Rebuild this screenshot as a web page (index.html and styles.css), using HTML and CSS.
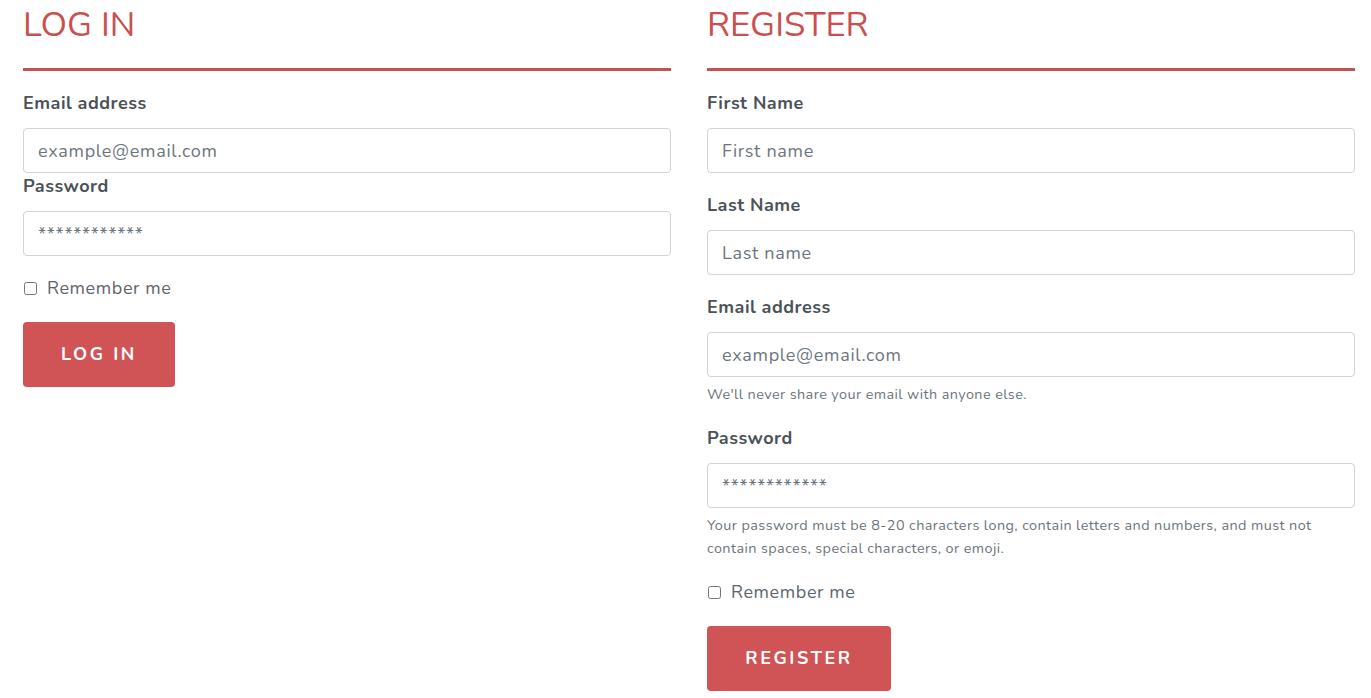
FILE: index.html
```html
<!DOCTYPE html>
<html lang="en">
<head>
<meta charset="utf-8">
<title>Log in / Register</title>
<link rel="stylesheet" href="styles.css">
</head>
<body>
<div class="page">
  <section class="panel">
    <h1 class="panel-title">LOG IN</h1>
    <form class="form">
      <div class="field tight">
        <label class="label">Email address</label>
        <input class="input" type="email" placeholder="example@email.com">
      </div>
      <div class="field">
        <label class="label">Password</label>
        <input class="input" type="text" placeholder="************">
      </div>
      <label class="check"><input type="checkbox" class="checkbox"><span>Remember me</span></label>
      <button type="button" class="btn btn-login">LOG IN</button>
    </form>
  </section>
  <section class="panel">
    <h1 class="panel-title">REGISTER</h1>
    <form class="form">
      <div class="field">
        <label class="label">First Name</label>
        <input class="input" type="text" placeholder="First name">
      </div>
      <div class="field">
        <label class="label">Last Name</label>
        <input class="input" type="text" placeholder="Last name">
      </div>
      <div class="field">
        <label class="label">Email address</label>
        <input class="input" type="email" placeholder="example@email.com">
        <p class="help">We'll never share your email with anyone else.</p>
      </div>
      <div class="field">
        <label class="label">Password</label>
        <input class="input" type="text" placeholder="************">
        <p class="help">Your password must be 8-20 characters long, contain letters and numbers, and must not contain spaces, special characters, or emoji.</p>
      </div>
      <label class="check"><input type="checkbox" class="checkbox"><span>Remember me</span></label>
      <button type="button" class="btn btn-register">REGISTER</button>
    </form>
  </section>
</div>
</body>
</html>
```
FILE: styles.css
```css
* { box-sizing: border-box; }
html, body { margin: 0; padding: 0; background: #fff; }
body {
  font-family: "Nunito", "Lato", "Noto Sans", sans-serif;
  color: #4b5258;
  font-size: 18px;
}
.page {
  display: grid;
  grid-template-columns: 1fr 1fr;
  column-gap: 36px;
  padding: 0 16px 0 23px;
}
.panel-title {
  margin: 0 0 19px 0;
  font-size: 34.5px;
  font-weight: 400;
  line-height: 44px;
  color: #c9504f;
  padding-top: 3px;
  padding-bottom: 21px;
  border-bottom: 3px solid #c25352;
}
.form { display: flex; flex-direction: column; align-items: flex-start; }
.field { width: 100%; margin-bottom: 19px; display: flex; flex-direction: column; }
.field.tight { margin-bottom: 0; }
.label {
  font-weight: 700;
  line-height: 27px;
  margin-bottom: 11px;
  letter-spacing: 0.5px;
  color: #4b5258;
}
.input {
  width: 100%;
  height: 45px;
  border: 1px solid #ced4da;
  border-radius: 4px;
  padding: 0 14px;
  font-family: inherit;
  font-size: 18px;
  letter-spacing: 0.7px;
  color: #495057;
  background: #fff;
}
.input::placeholder { color: #6c757d; opacity: 1; }
.help {
  margin: 6px 0 0 0;
  font-size: 14.4px;
  line-height: 23px;
  letter-spacing: 0.42px;
  color: #6c757d;
}
.check {
  display: flex;
  align-items: center;
  line-height: 27px;
  color: #5d656c;
  letter-spacing: 0.6px;
  margin-bottom: 20px;
}
.checkbox {
  width: 13px;
  height: 13px;
  margin: 0 10px 0 1px;
}
.btn {
  border: 0;
  border-radius: 4px;
  background: #d05355;
  color: #fff;
  font-family: inherit;
  font-size: 18px;
  font-weight: 700;
  letter-spacing: 2.6px;
  line-height: 27px;
  padding: 19px 36px;
  height: 65px;
}
.btn-login { width: 152px; }
.btn-register { width: 184px; }
```
